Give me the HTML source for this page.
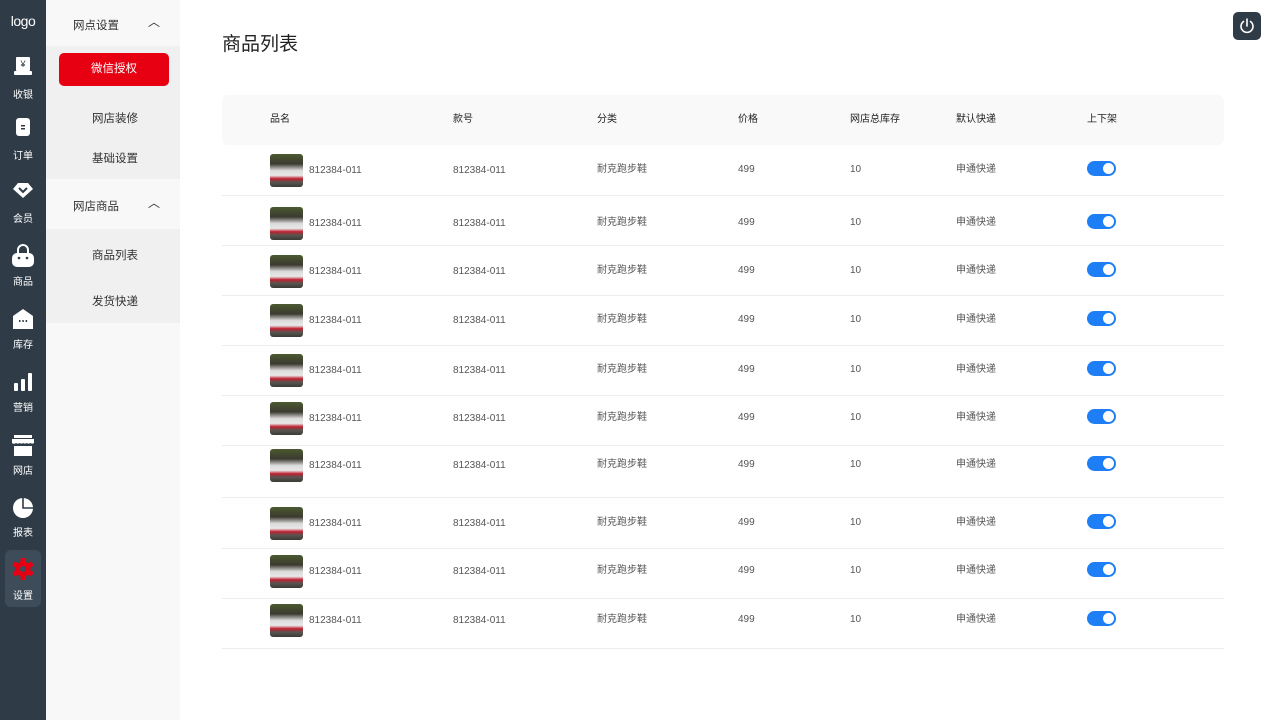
<!DOCTYPE html><html><head><meta charset="utf-8"><style>
*{margin:0;padding:0;box-sizing:border-box}
body{width:1280px;height:720px;overflow:hidden;background:#fff;font-family:"Liberation Sans","Noto Sans CJK SC",sans-serif;position:relative}
.a{position:absolute}
.side{left:0;top:0;width:46px;height:720px;background:#2f3c48}
.nl{width:46px;text-align:center;color:#fff;font-size:10px;left:0;line-height:14px;margin-top:3px}
.ic{left:13px;width:20px;height:20px}
.p2{left:46px;top:0;width:134px;height:720px;background:#f8f8f8}
.sub{left:46px;width:134px;background:#f0f0f0}
.m{font-size:11.5px;color:#333;line-height:16px;margin-top:1px}
.t{font-size:10px;color:#555;line-height:14px;margin-top:2px}
.h{font-size:10px;color:#222;line-height:14px}
.line{left:222px;width:1002px;height:1px;background:#ececec}
.img{left:270px;width:33px;height:33px;border-radius:3px;background:linear-gradient(180deg,#4a5a30 0%,#3c3a30 30%,#dcdcdc 50%,#e8e8e8 65%,#c02030 75%,#5a5550 85%,#3a3a35 100%)}
.tg{left:1087px;width:29px;height:15px;border-radius:8px;background:#1e7ef5}
.tg:after{content:"";position:absolute;right:2px;top:2px;width:11px;height:11px;border-radius:50%;background:#fff}
</style></head><body>
<div class="a side"></div>
<div class="a" style="left:0;top:13px;width:46px;text-align:center;color:#fff;font-size:14px;letter-spacing:-0.5px">logo</div>
<svg class="a ic" style="top:56px" viewBox="0 0 20 20"><rect x="3" y="1" width="14" height="14" rx="1" fill="#fff"/><rect x="1" y="15" width="18" height="4" rx="1" fill="#fff"/><text x="10" y="11" font-size="9" text-anchor="middle" fill="#2f3c48">¥</text></svg>
<div class="a nl" style="top:86px">收银</div>
<svg class="a ic" style="top:117px" viewBox="0 0 20 20"><rect x="3" y="1" width="14" height="18" rx="3" fill="#fff"/><rect x="8" y="8" width="4" height="1.5" fill="#2f3c48"/><rect x="8" y="11" width="4" height="1.5" fill="#2f3c48"/></svg>
<div class="a nl" style="top:147px">订单</div>
<svg class="a ic" style="top:180px" viewBox="0 0 20 20"><path d="M5 3h10l5 6-10 9L0 9z" fill="#fff"/><path d="M6 8l4 4 4-4" stroke="#2f3c48" stroke-width="2" fill="none"/></svg>
<div class="a nl" style="top:210px">会员</div>
<svg class="a ic" style="top:244px;left:11px;width:24px;height:24px" viewBox="0 0 24 24"><path d="M7 9V6a5 5 0 0110 0v3" stroke="#fff" stroke-width="2" fill="none"/><rect x="1" y="9" width="22" height="14" rx="5" fill="#fff"/><circle cx="8" cy="14" r="1.3" fill="#2f3c48"/><circle cx="16" cy="14" r="1.3" fill="#2f3c48"/></svg>
<div class="a nl" style="top:273px">商品</div>
<svg class="a ic" style="top:308px;left:12px;width:22px;height:22px" viewBox="0 0 22 22"><path d="M1 8l10-7 10 7v13H1z" fill="#fff"/><rect x="7" y="12" width="1.5" height="2" fill="#2f3c48"/><rect x="10.3" y="12" width="1.5" height="2" fill="#2f3c48"/><rect x="13.6" y="12" width="1.5" height="2" fill="#2f3c48"/></svg>
<div class="a nl" style="top:336px">库存</div>
<svg class="a ic" style="top:372px" viewBox="0 0 20 20"><rect x="1" y="11" width="4" height="8" rx="1" fill="#fff"/><rect x="8" y="7" width="4" height="12" rx="1" fill="#fff"/><rect x="15" y="1" width="4" height="18" rx="1" fill="#fff"/></svg>
<div class="a nl" style="top:399px">营销</div>
<svg class="a ic" style="top:434px;left:11px;width:24px;height:24px" viewBox="0 0 24 24"><rect x="3" y="1" width="18" height="3" fill="#fff"/><path d="M1 5h22v4a3 3 0 01-3.6 0 3 3 0 01-3.6 0 3 3 0 01-3.6 0 3 3 0 01-3.6 0 3 3 0 01-3.6 0A3 3 0 011 9z" fill="#fff"/><rect x="3" y="12" width="18" height="10" fill="#fff"/></svg>
<div class="a nl" style="top:462px">网店</div>
<svg class="a ic" style="top:497px;left:12px;width:22px;height:22px" viewBox="0 0 22 22"><circle cx="11" cy="11" r="10" fill="#fff"/><path d="M11 1v10h10" stroke="#2f3c48" stroke-width="1.6" fill="none"/></svg>
<div class="a nl" style="top:524px">报表</div>
<div class="a" style="left:5px;top:550px;width:36px;height:57px;border-radius:6px;background:#3e4c59"></div>
<svg class="a ic" style="top:558px;left:12px;width:22px;height:22px" viewBox="0 0 22 22"><g fill="#e60012"><circle cx="11" cy="11" r="7.5"/><rect x="8.5" y="0" width="5" height="22" rx="1"/><rect x="8.5" y="0" width="5" height="22" rx="1" transform="rotate(60 11 11)"/><rect x="8.5" y="0" width="5" height="22" rx="1" transform="rotate(120 11 11)"/></g><circle cx="11" cy="11" r="3" fill="#3e4c59"/></svg>
<div class="a nl" style="top:587px">设置</div>

<div class="a p2"></div>
<div class="a sub" style="top:46px;height:133px"></div>
<div class="a sub" style="top:229px;height:94px"></div>
<div class="a m" style="left:73px;top:17px">网点设置</div>
<div class="a" style="left:148px;top:13px;font-size:12px;color:#333">︿</div>
<div class="a" style="left:59px;top:53px;width:110px;height:33px;border-radius:5px;background:#e60012;color:#fff;font-size:11.5px;text-align:center;line-height:33px">微信授权</div>
<div class="a m" style="left:92px;top:110px">网店装修</div>
<div class="a m" style="left:92px;top:150px">基础设置</div>
<div class="a m" style="left:73px;top:198px">网店商品</div>
<div class="a" style="left:148px;top:194px;font-size:12px;color:#333">︿</div>
<div class="a m" style="left:92px;top:247px">商品列表</div>
<div class="a m" style="left:92px;top:293px">发货快递</div>

<div class="a" style="left:222px;top:33px;font-size:19px;color:#222;line-height:24px">商品列表</div>
<div class="a" style="left:1233px;top:12px;width:28px;height:28px;border-radius:5px;background:#2f3c48"></div>
<svg class="a" style="left:1238px;top:17px" width="18" height="18" viewBox="0 0 18 18"><path d="M5.5 4.5a6 6 0 107 0" stroke="#fff" stroke-width="1.6" fill="none" stroke-linecap="round"/><path d="M9 2v7" stroke="#fff" stroke-width="1.6" stroke-linecap="round"/></svg>

<div class="a" style="left:222px;top:95px;width:1002px;height:50px;border-radius:6px;background:#f9f9f9"></div>
<div class="a h" style="left:270px;top:113px">品名</div>
<div class="a h" style="left:453px;top:113px">款号</div>
<div class="a h" style="left:597px;top:113px">分类</div>
<div class="a h" style="left:738px;top:113px">价格</div>
<div class="a h" style="left:850px;top:113px">网店总库存</div>
<div class="a h" style="left:956px;top:113px">默认快递</div>
<div class="a h" style="left:1087px;top:113px">上下架</div>

<div id="rows"></div>
<script>
var c=[170,223,271,320,370,418,465,523,571,620],L=[195,245,295,345,395,445,497,548,598,648],h='';
for(var i=0;i<10;i++){var y=c[i];
h+='<div class="a img" style="top:'+(y-16)+'px"></div>'+
'<div class="a t" style="left:309px;top:'+(y-8)+'px">812384-011</div>'+
'<div class="a t" style="left:453px;top:'+(y-8)+'px">812384-011</div>'+
'<div class="a t" style="left:597px;top:'+(y-9)+'px">耐克跑步鞋</div>'+
'<div class="a t" style="left:738px;top:'+(y-9)+'px">499</div>'+
'<div class="a t" style="left:850px;top:'+(y-9)+'px">10</div>'+
'<div class="a t" style="left:956px;top:'+(y-9)+'px">申通快递</div>'+
'<div class="a tg" style="top:'+(y-9)+'px"></div>'+
'<div class="a line" style="top:'+L[i]+'px"></div>';}
document.getElementById('rows').innerHTML=h;
</script>
</body></html>
